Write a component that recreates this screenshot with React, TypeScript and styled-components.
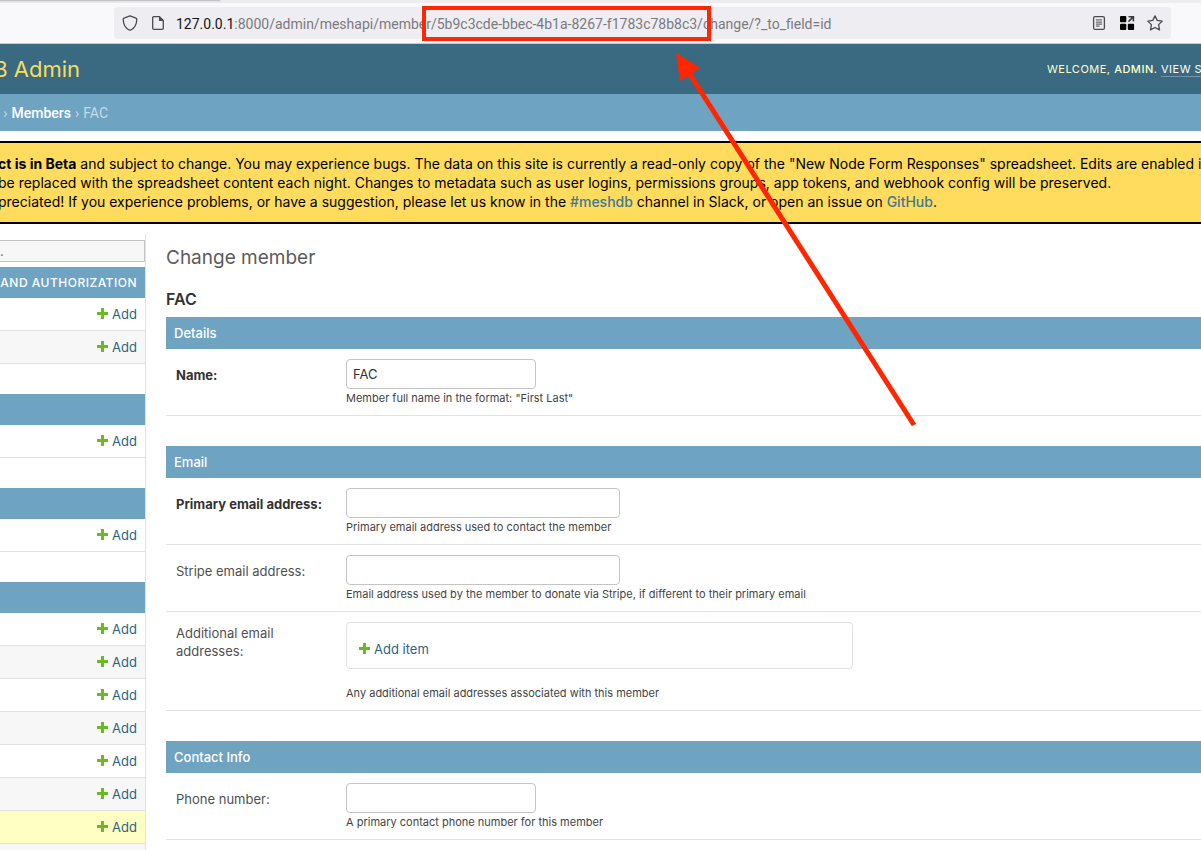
import React from "react";
import styled, { createGlobalStyle } from "styled-components";

const GlobalStyle = createGlobalStyle`
  *, *::before, *::after { box-sizing: border-box; }
  html { height: 100%; overflow: hidden; }
  body {
    margin: 0;
    height: 100%;
    overflow: hidden;
    background: #fff;
    color: #333;
    font-family: Inter, "Liberation Sans", sans-serif;
    font-size: 14px;
  }
  #root { height: 100%; }
  a { text-decoration: none; }
  h1, h2, h3, p { margin: 0; }
`;

const Page = styled.div`
  position: relative;
  display: flex;
  flex-direction: column;
  height: 100%;
  overflow: hidden;
`;

/* Browser chrome */
const TabStrip = styled.div`
  display: flex;
  height: 3px;
  flex: none;
  background: #ededf0;
`;
const ActiveTab = styled.div`
  width: 220px;
  height: 1px;
  background: #c4c4c8;
  box-shadow: 0 0 2px #b8b8bc;
`;
const Toolbar = styled.div`
  flex: none;
  height: 41px;
  padding: 4px 30px 4px 114px;
  background: #f9f9fb;
  border-bottom: 1px solid #cbcccd;
`;
const AddressBar = styled.div`
  display: flex;
  align-items: center;
  height: 32px;
  padding: 0 8px;
  border-radius: 4px;
  background: #eeedf1;
`;
const ChromeButton = styled.button<{ $gap?: number }>`
  display: flex;
  padding: 0;
  margin-right: ${(p) => p.$gap ?? 0}px;
  border: 0;
  background: none;
  color: #4a4a50;
`;
const Url = styled.div`
  flex: 1;
  min-width: 0;
  overflow: hidden;
  white-space: nowrap;
  font-family: Roboto, sans-serif;
  padding-top: 2px;
  line-height: 20px;
  color: #7b7a80;
`;
const Host = styled.span`
  color: #15141a;
`;

/* Site header */
const Header = styled.header`
  display: flex;
  flex: none;
  align-items: center;
  justify-content: space-between;
  height: 50px;
  background: #3a6a82;
  overflow: hidden;
`;
const Brand = styled.h1`
  display: flex;
  justify-content: flex-end;
  width: 80px;
  overflow: hidden;
  white-space: nowrap;
  font-size: 22px;
  line-height: 30px;
  font-weight: 400;
  color: #f5dd5d;
`;
const UserTools = styled.div`
  width: 154px;
  overflow: hidden;
  white-space: nowrap;
  font-size: 11px;
  line-height: 14px;
  letter-spacing: 0.5px;
  color: #ffffcc;

  a {
    display: inline-block;
    color: #fff;
    border-bottom: 1px solid #7596a8;
  }
  strong { font-weight: 500; }
`;
const Breadcrumbs = styled.nav`
  display: flex;
  flex: none;
  align-items: center;
  height: 37px;
  overflow: hidden;
  white-space: nowrap;
  font-family: Roboto, sans-serif;
  background: #6fa3c2;
  color: #c4dce8;
`;
const Trail = styled.div`
  display: flex;
  justify-content: flex-end;
  gap: 4px;
  width: 108px;

  a { color: #fff; font-weight: 500; }
`;

/* Beta notice */
const Notice = styled.div`
  flex: none;
  margin: 10px 0;
  padding: 11px 0;
  overflow: hidden;
  border: solid #000;
  border-width: 2px 0;
  background: #ffdc5e;
  color: #000;
`;
const NoticeLine = styled.p`
  margin-left: -2px;
  white-space: nowrap;
  line-height: 19px;

  a { color: #417893; font-weight: 500; }
`;

/* Body */
const Body = styled.div`
  display: flex;
  flex: 1;
  min-height: 0;
`;
const Sidebar = styled.nav`
  flex: none;
  width: 146px;
  padding-top: 6px;
  overflow: hidden;
  border-right: 1px solid #e2e2e2;
`;
const Filter = styled.input`
  display: block;
  width: 100%;
  height: 22px;
  margin-bottom: 5px;
  padding: 0;
  border: 1px solid #c4c4c4;
  border-left: 0;
  background: #f7f7f7;
  color: #777;
  font: 13px Inter, sans-serif;
  outline: 0;
`;
const AppTable = styled.table`
  width: 100%;
  margin-bottom: 30px;
  border-collapse: separate;
  border-spacing: 0;
`;
const AppCaption = styled.caption`
  height: 31px;
  padding-right: 8px;
  overflow: hidden;
  white-space: nowrap;
  text-align: right;
  font-size: 12px;
  line-height: 31px;
  letter-spacing: 0.5px;
  font-weight: 500;
  background: #6fa3c2;
  color: #fff;
`;
const ModelCell = styled.td<{ $tone: string }>`
  height: 33px;
  padding: 0 8px 0 0;
  border-bottom: 1px solid #e2e2e2;
  background: ${(p) => p.$tone};
`;
const AddLink = styled.a`
  display: flex;
  align-items: center;
  justify-content: flex-end;
  gap: 4px;
  font-size: 13px;
  line-height: 18px;
  color: #2b6482;
`;

/* Form */
const Content = styled.main`
  flex: 1;
  min-width: 0;
  padding: 10px 0 0 20px;
  overflow: hidden;
`;
const Title = styled.h1`
  margin-bottom: 17px;
  font-size: 19px;
  line-height: 28px;
  font-weight: 400;
  color: #5c5c5c;
`;
const ObjectName = styled.h2`
  margin-bottom: 8px;
  font-size: 16px;
  line-height: 20px;
  font-weight: 600;
`;
const Fieldset = styled.section`
  margin-bottom: 30px;
`;
const Legend = styled.h3`
  height: 32px;
  padding-left: 8px;
  font-size: 13px;
  line-height: 32px;
  font-weight: 500;
  background: #6fa3c2;
  color: #fff;
`;
const Row = styled.div`
  display: flex;
  padding: 10px;
  border-bottom: 1px solid #e2e2e2;
`;
const Label = styled.label<{ $required?: boolean; $top?: boolean }>`
  flex: none;
  width: 170px;
  padding: ${(p) => (p.$top ? "2px 30px 0 0" : "7px 10px 0 0")};
  font-size: 13px;
  line-height: 18px;
  font-weight: ${(p) => (p.$required ? 700 : 400)};
  color: ${(p) => (p.$required ? "#333" : "#505050")};
`;
const Field = styled.div`
  flex: 1;
  min-width: 0;
`;
const TextInput = styled.input<{ $wide?: boolean }>`
  display: block;
  width: ${(p) => (p.$wide ? 274 : 190)}px;
  height: 30px;
  padding: 5px 6px;
  border: 1px solid #c4c4c4;
  border-radius: 4px;
  background: #fff;
  color: #333;
  font: 13px Inter, sans-serif;
  outline: 0;
`;
const Help = styled.p<{ $gap?: number }>`
  margin-top: ${(p) => p.$gap ?? 2}px;
  font-size: 11px;
  line-height: 14px;
  color: #444;
`;
const ItemList = styled.div`
  display: flex;
  align-items: flex-end;
  width: 507px;
  height: 47px;
  padding: 10px 12px;
  border: 1px solid #e2e2e2;
  border-radius: 4px;
`;

/* Annotation drawn over the page */
const Highlight = styled.div`
  position: absolute;
  left: 422px;
  top: 6px;
  width: 289px;
  height: 35px;
  border: 4px solid #ff2600;
`;
const Arrow = styled.svg`
  position: absolute;
  left: 660px;
  top: 40px;
  pointer-events: none;
`;

const PlusIcon = () => (
  <svg width="11" height="12" viewBox="0 0 11 12" aria-hidden="true">
    <path d="M4 0h3v4h4v3H7v4H4V7H0V4h4z" fill="#6abb22" />
  </svg>
);
const ShieldIcon = () => (
  <svg width="16" height="16" viewBox="0 0 16 16" fill="none" stroke="currentColor" strokeWidth="1.3" strokeLinejoin="round">
    <path d="M8 .8 14 3.1c.5.2.8.6.8 1.1-.1 5-1.900 8.700-6 10.800a1.700 1.700 0 0 1-1.600 0C3.100 12.900 1.300 9.200 1.200 4.200c0-.5.300-.9.800-1.100z" />
  </svg>
);
const PageIcon = () => (
  <svg width="16" height="16" viewBox="0 0 16 16">
    <path d="M3.700 1.700H9.500L13.300 5.500V13a1.300 1.300 0 0 1-1.300 1.300H4A1.300 1.300 0 0 1 2.700 13V2.700a1 1 0 0 1 1-1z" fill="none" stroke="currentColor" strokeWidth="1.300" strokeLinejoin="round" />
    <path d="M9 1.500 13.500 6H9z" fill="currentColor" />
  </svg>
);
const ReaderIcon = () => (
  <svg width="16" height="16" viewBox="0 0 16 16" fill="none" stroke="currentColor" strokeWidth="1.300" strokeLinecap="round">
    <rect x="2.600" y="1.600" width="10.800" height="12.800" rx="1.500" />
    <path d="M5.300 4.900h5.400M5.300 7.100h5.400M5.300 9.100h5.400M5.300 11.100h3" strokeWidth="1" />
  </svg>
);
const GridIcon = () => (
  <svg width="16" height="16" viewBox="0 0 16 16" fill="#000">
    <rect x="1" y="1" width="6.300" height="6.300" rx="1" />
    <rect x="1" y="8.800" width="6.300" height="6.300" rx="1" />
    <rect x="8.800" y="8.800" width="6.300" height="6.300" rx="1" />
    <path d="M9.500 1.700H14.400V6.500M14.200 1.900 9.500 6.600" fill="none" stroke="#3a3a40" strokeWidth="1.600" />
  </svg>
);
const StarIcon = () => (
  <svg width="16" height="16" viewBox="0 0 16 16" fill="none" stroke="currentColor" strokeWidth="1.300" strokeLinejoin="round">
    <path d="M8 .9 10.200 5.400 15.200 6.100 11.600 9.600 12.500 14.900 8 12.500 3.500 14.900 4.400 9.600.8 6.100 5.800 5.400z" />
  </svg>
);

const WHITE = "#fff";
const STRIPE = "#f7f7f7";
const CURRENT = "#ffffc4";

const apps = [
  { caption: "AND AUTHORIZATION", rows: [WHITE, STRIPE] },
  { caption: "", rows: [WHITE] },
  { caption: "", rows: [WHITE] },
  { caption: "", rows: [WHITE, STRIPE, WHITE, STRIPE, WHITE, STRIPE, CURRENT, STRIPE] },
];

type TextRowProps = {
  id: string;
  label: string;
  help: string;
  value?: string;
  required?: boolean;
  wide?: boolean;
};
const TextRow = ({ id, label, help, value, required, wide }: TextRowProps) => (
  <Row>
    <Label htmlFor={id} $required={required}>{label}</Label>
    <Field>
      <TextInput id={id} type="text" defaultValue={value} $wide={wide} />
      <Help>{help}</Help>
    </Field>
  </Row>
);

export default function App() {
  return (
    <>
      <GlobalStyle />
      <Page>
        <TabStrip><ActiveTab /></TabStrip>
        <Toolbar>
          <AddressBar>
            <ChromeButton $gap={12} aria-label="Protections"><ShieldIcon /></ChromeButton>
            <ChromeButton $gap={10} aria-label="Site information"><PageIcon /></ChromeButton>
            <Url>
              <Host>127.0.0.1</Host>
              :8000/admin/meshapi/member/5b9c3cde-bbec-4b1a-8267-f1783c78b8c3/change/?_to_field=id
            </Url>
            <ChromeButton $gap={12} aria-label="Reader view"><ReaderIcon /></ChromeButton>
            <ChromeButton $gap={12} aria-label="Extensions"><GridIcon /></ChromeButton>
            <ChromeButton aria-label="Bookmark"><StarIcon /></ChromeButton>
          </AddressBar>
        </Toolbar>

        <Header>
          <Brand>B Admin</Brand>
          <UserTools>
            WELCOME, <strong>ADMIN</strong>. <a href="#site">VIEW SITE</a>
          </UserTools>
        </Header>
        <Breadcrumbs>
          <Trail>
            <span>›</span>
            <a href="#members">Members</a>
            <span>›</span>
            <span>FAC</span>
          </Trail>
        </Breadcrumbs>

        <Notice>
          <NoticeLine>
            <strong>ct is in Beta</strong> and subject to change. You may experience bugs. The data on this site is
            currently a read-only copy of the "New Node Form Responses" spreadsheet. Edits are enabled in the
          </NoticeLine>
          <NoticeLine>
            be replaced with the spreadsheet content each night. Changes to metadata such as user logins, permissions
            groups, app tokens, and webhook config will be preserved.
          </NoticeLine>
          <NoticeLine>
            preciated! If you experience problems, or have a suggestion, please let us know in the{" "}
            <a href="#meshdb">#meshdb</a> channel in Slack, or open an issue on <a href="#github">GitHub</a>.
          </NoticeLine>
        </Notice>

        <Body>
          <Sidebar>
            <Filter type="text" aria-label="Filter navigation items" placeholder="." />
            {apps.map((app, i) => (
              <AppTable key={i}>
                <AppCaption>{app.caption}</AppCaption>
                <tbody>
                  {app.rows.map((tone, j) => (
                    <tr key={j}>
                      <ModelCell $tone={tone}>
                        <AddLink href="#add"><PlusIcon />Add</AddLink>
                      </ModelCell>
                    </tr>
                  ))}
                </tbody>
              </AppTable>
            ))}
          </Sidebar>

          <Content>
            <Title>Change member</Title>
            <ObjectName>FAC</ObjectName>
            <Fieldset>
              <Legend>Details</Legend>
              <TextRow id="name" label="Name:" value="FAC" required help={'Member full name in the format: "First Last"'} />
            </Fieldset>
            <Fieldset>
              <Legend>Email</Legend>
              <TextRow id="primary" label="Primary email address:" required wide help="Primary email address used to contact the member" />
              <TextRow id="stripe" label="Stripe email address:" wide help="Email address used by the member to donate via Stripe, if different to their primary email" />
              <Row>
                <Label as="div" $top>Additional email addresses:</Label>
                <Field>
                  <ItemList>
                    <AddLink href="#add-item"><PlusIcon />Add item</AddLink>
                  </ItemList>
                  <Help $gap={17}>Any additional email addresses associated with this member</Help>
                </Field>
              </Row>
            </Fieldset>
            <Fieldset>
              <Legend>Contact Info</Legend>
              <TextRow id="phone" label="Phone number:" help="A primary contact phone number for this member" />
              <Row>
                <Label as="div" $top />
                <Field><ItemList /></Field>
              </Row>
            </Fieldset>
          </Content>
        </Body>

        <Highlight />
        <Arrow width="260" height="390" viewBox="0 0 260 390" aria-hidden="true">
          <path d="M29 33 254 385" stroke="#ff2600" strokeWidth="5" />
          <path d="M16 13 40 28 20 41z" fill="#ff2600" />
        </Arrow>
      </Page>
    </>
  );
}
